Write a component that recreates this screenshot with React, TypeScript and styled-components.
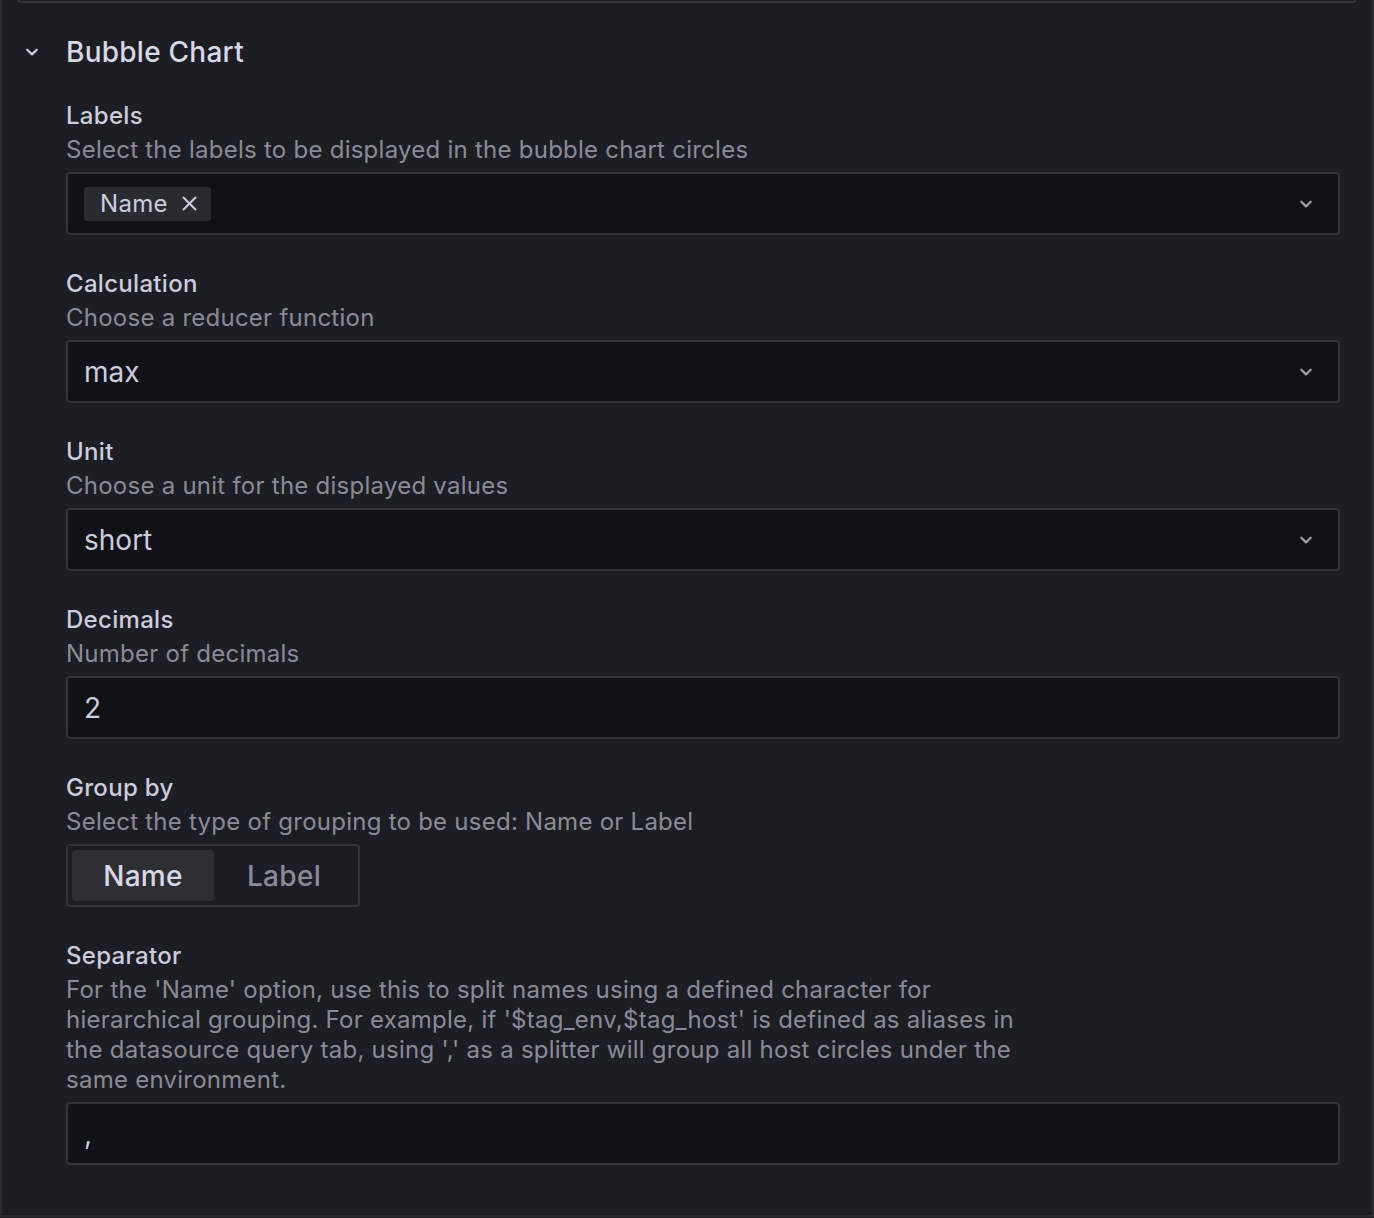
import React from "react";
import styled, { createGlobalStyle } from "styled-components";

const Global = createGlobalStyle`
  html, body { margin: 0; padding: 0; background: #1d1e23; }
  body { font-family: Inter, "Noto Sans", sans-serif; color: #ccccdc; -webkit-font-smoothing: antialiased; }
  * { box-sizing: border-box; }
`;

const Panel = styled.div`
  width: 1374px;
  height: 1217px;
  border-left: 2px solid #2b2c32;
  border-right: 2px solid #2b2c32;
  border-bottom: 2px solid #2b2c32;
  display: flex;
  flex-direction: column;
`;

const PrevCard = styled.div`
  height: 3px;
  margin: 0 16px 0 16px;
  border: 2px solid #36373d;
  border-top: none;
  border-radius: 0 0 6px 6px;
`;

const Header = styled.div`
  display: flex;
  align-items: center;
  height: 40px;
  margin-top: 29px;
  padding-left: 22px;
`;

const ChevronBox = styled.span`
  width: 42px;
  display: flex;
  align-items: center;
  color: #ccccdc;
`;

const Title = styled.h2`
  margin: 0;
  font-size: 28px;
  font-weight: 500;
  line-height: 40px;
  color: #d8d8e6;
  letter-spacing: 0.25px;
`;

const Body = styled.div`
  padding: 29px 32px 0 64px;
  display: flex;
  flex-direction: column;
  gap: 34px;
`;

const Field = styled.div`
  display: flex;
  flex-direction: column;
`;

const Label = styled.div`
  font-size: 24px;
  font-weight: 500;
  line-height: 30px;
  letter-spacing: 0.3px;
  color: #ccccdc;
`;

const Desc = styled.div`
  margin-top: 4px;
  font-size: 24px;
  line-height: 30px;
  letter-spacing: 0.25px;
  color: rgba(204, 204, 220, 0.65);
  max-width: 960px;
  margin-bottom: 7px;
`;

const InputBox = styled.div`
  height: 63px;
  flex-shrink: 0;
  background: #111217;
  border: 2px solid #34353b;
  border-radius: 4px;
  display: flex;
  align-items: center;
  padding: 0 16px;
  font-size: 28px;
  color: #ccccdc;
`;

const Value = styled.span`
  flex: 1;
  line-height: 1;
`;

const Tag = styled.span`
  display: inline-flex;
  align-items: center;
  gap: 14px;
  height: 34px;
  padding: 0 14px 0 16px;
  background: #2a2b31;
  border-radius: 3px;
  font-size: 24px;
  letter-spacing: 0.3px;
  color: #ccccdc;
`;

const Tags = styled.div`
  flex: 1;
  display: flex;
`;

const Caret = styled.span`
  display: flex;
  align-items: center;
  color: #9fa0aa;
  margin-right: 8px;
`;

const Radio = styled.div`
  display: inline-flex;
  align-self: flex-start;
  flex-shrink: 0;
  height: 63px;
  padding: 4px;
  border: 2px solid #34353b;
  border-radius: 4px;
`;

const RadioOpt = styled.div<{ $active?: boolean }>`
  display: flex;
  align-items: center;
  justify-content: center;
  width: ${(p) => (p.$active ? "142px" : "140px")};
  font-size: 28px;
  font-weight: 500;
  letter-spacing: 0.3px;
  border-radius: 4px;
  color: ${(p) => (p.$active ? "#d8d8e6" : "rgba(204,204,220,0.65)")};
  background: ${(p) => (p.$active ? "#2e2f35" : "transparent")};
`;

const Chevron = ({ size = 16 }: { size?: number }) => (
  <svg width={size} height={size} viewBox="0 0 16 16" fill="none">
    <path d="M3.3 5.8 L8 10.4 L12.7 5.8" stroke="currentColor" strokeWidth="2.3" strokeLinecap="round" strokeLinejoin="round" />
  </svg>
);

const Close = () => (
  <svg width="15" height="15" viewBox="0 0 15 15" fill="none">
    <path d="M1.5 1.5 L13.5 13.5 M13.5 1.5 L1.5 13.5" stroke="#ccccdc" strokeWidth="2" strokeLinecap="round" />
  </svg>
);

export default function App() {
  return (
    <>
      <Global />
      <Panel>
        <PrevCard />
        <Header>
          <ChevronBox>
            <Chevron size={16} />
          </ChevronBox>
          <Title>Bubble Chart</Title>
        </Header>
        <Body>
          <Field>
            <Label>Labels</Label>
            <Desc>Select the labels to be displayed in the bubble chart circles</Desc>
            <InputBox>
              <Tags>
                <Tag>
                  Name <Close />
                </Tag>
              </Tags>
              <Caret>
                <Chevron />
              </Caret>
            </InputBox>
          </Field>
          <Field>
            <Label>Calculation</Label>
            <Desc>Choose a reducer function</Desc>
            <InputBox>
              <Value>max</Value>
              <Caret>
                <Chevron />
              </Caret>
            </InputBox>
          </Field>
          <Field>
            <Label>Unit</Label>
            <Desc>Choose a unit for the displayed values</Desc>
            <InputBox>
              <Value>short</Value>
              <Caret>
                <Chevron />
              </Caret>
            </InputBox>
          </Field>
          <Field>
            <Label>Decimals</Label>
            <Desc>Number of decimals</Desc>
            <InputBox>
              <Value>2</Value>
            </InputBox>
          </Field>
          <Field>
            <Label>Group by</Label>
            <Desc>Select the type of grouping to be used: Name or Label</Desc>
            <Radio>
              <RadioOpt $active>Name</RadioOpt>
              <RadioOpt>Label</RadioOpt>
            </Radio>
          </Field>
          <Field>
            <Label>Separator</Label>
            <Desc>
              For the 'Name' option, use this to split names using a defined character for hierarchical grouping. For
              example, if '$tag_env,$tag_host' is defined as aliases in the datasource query tab, using ',' as a
              splitter will group all host circles under the same environment.
            </Desc>
            <InputBox>
              <Value>,</Value>
            </InputBox>
          </Field>
        </Body>
      </Panel>
    </>
  );
}
